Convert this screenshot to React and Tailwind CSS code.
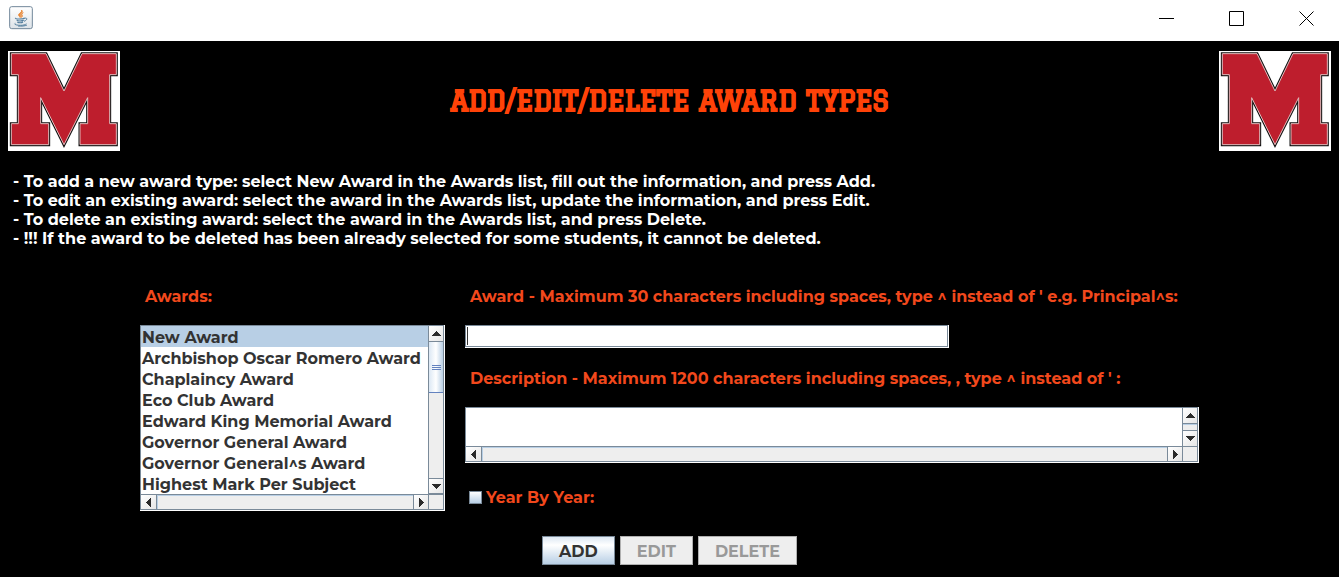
import React, { useState } from 'react';

const awards = [
  'New Award',
  'Archbishop Oscar Romero Award',
  'Chaplaincy Award',
  'Eco Club Award',
  'Edward King Memorial Award',
  'Governor General Award',
  'Governor General^s Award',
  'Highest Mark Per Subject',
];

const instructions = [
  '- To add a new award type: select New Award in the Awards list, fill out the information, and press Add.',
  '- To edit an existing award: select the award in the Awards list, update the information, and press Edit.',
  '- To delete an existing award: select the award in the Awards list, and press Delete.',
  '- !!! If the award to be deleted has been already selected for some students, it cannot be deleted.',
];

const M_PATH =
  'M10 8H114L168 120L222 8H325V71H305V218H325V281H216V218H239V140L168 281L98 140V218H122V281H10V218H31V71H10Z';

function Logo() {
  return (
    <svg className="h-[100px] w-28 shrink-0 bg-white" viewBox="0 0 336 300" role="img" aria-label="M">
      <path d={M_PATH} fill="none" stroke="#111" strokeWidth="9" />
      <path d={M_PATH} fill="#be1e2d" stroke="#e3b9bb" strokeWidth="3" />
    </svg>
  );
}

function JavaIcon() {
  return (
    <svg className="h-6 w-6" viewBox="0 0 72 72" fill="none">
      <defs>
        <linearGradient id="tile" x1="0" y1="0" x2="0" y2="1">
          <stop offset="0" stopColor="#ffffff" />
          <stop offset="1" stopColor="#dde3e8" />
        </linearGradient>
      </defs>
      <rect x="2" y="2" width="68" height="66" rx="6" fill="url(#tile)" stroke="#71879a" strokeWidth="3" />
      <path d="M37 12C42 18 27 22 29 28C30 31 33 32 33 34C37 31 32 28 34 25C36 21 44 18 37 12Z" fill="#e98a3a" stroke="#e98a3a" strokeWidth="3" />
      <path d="M43 20C37 22 35 26 38 29C39 31 37 33 35 35C43 31 41 29 39 27C38 24 40 22 43 20Z" fill="#e98a3a" stroke="#e98a3a" strokeWidth="2" />
      <path d="M20 36C15 40 42 40 47 36M23 42C26 46 40 46 44 42M25 48C29 51 38 51 42 48" stroke="#557f9e" strokeWidth="3.4" />
      <path d="M46 37C56 34 56 42 45 46" stroke="#557f9e" strokeWidth="3" />
      <path d="M19 52C8 57 46 62 52 53M27 60C37 61 48 60 54 57" stroke="#557f9e" strokeWidth="3" />
    </svg>
  );
}

const ARROWS = {
  Up: 'M4 0h1v1h1v1h1v1h1v1h1v1H0V4h1V3h1V2h1V1h1z',
  Down: 'M0 0h9v1H8v1H7v1H6v1H5v1H4V4H3V3H2V2H1V1H0z',
  Left: 'M5 0v9H4V8H3V7H2V6H1V5H0V4h1V3h1V2h1V1h1V0z',
  Right: 'M0 0h1v1h1v1h1v1h1v1h1v1H4v1H3v1H2v1H1v1H0z',
};

function Arrow({ dir, className }) {
  const flat = dir === 'Up' || dir === 'Down';
  return (
    <button
      type="button"
      aria-label={'Scroll ' + dir.toLowerCase()}
      className={'flex shrink-0 items-center justify-center border-[#7a8a99] bg-linear-to-br from-white to-[#e6e6e6] ' + className}
    >
      <svg className={flat ? 'h-[5px] w-[9px]' : 'h-[9px] w-[5px]'} viewBox={flat ? '0 0 9 5' : '0 0 5 9'}>
        <path d={ARROWS[dir]} fill="#2b2b2b" />
      </svg>
    </button>
  );
}

function HorizontalBar() {
  return (
    <div className="flex h-[15px] border-t border-[#7a8a99]">
      <div className="flex grow">
        <Arrow dir="Left" className="w-4 border-r" />
        <div className="grow border-t border-l border-[#b8cfe5] bg-[#eeeeee]" />
        <Arrow dir="Right" className="w-4 border-x" />
      </div>
      <div className="w-[14px] shrink-0 bg-[#eeeeee]" />
    </div>
  );
}

function ScrollPane({ children, bar }) {
  return (
    <div className="mt-[19px] border-r border-b border-white">
      <div className="border border-[#7a8a99] bg-white">
        <div className="flex">
          <div className="flex min-w-0 grow">{children}</div>
          <div className="flex w-[15px] shrink-0 flex-col border-l border-[#7a8a99] bg-[#eeeeee]">{bar}</div>
        </div>
        <HorizontalBar />
      </div>
    </div>
  );
}

const labelClass = 'block pl-[5px] text-[#f2481c]';

export default function App() {
  const [award, setAward] = useState(awards[0]);
  return (
    <div className="flex min-h-screen flex-col bg-black font-['Montserrat','Inter',sans-serif] text-base leading-[19px] font-bold">
      <header className="flex h-[41px] items-center justify-between bg-white pr-6 pb-1.5 pl-[9px]">
        <JavaIcon />
        <div className="flex items-center gap-[54px]">
          <button type="button" aria-label="Minimize">
            <svg className="h-4 w-4" viewBox="0 0 16 16"><path d="M0 8.5h15" stroke="#000" /></svg>
          </button>
          <button type="button" aria-label="Maximize">
            <svg className="h-4 w-4" viewBox="0 0 16 16"><path d="M.5 1.5h14v14H.5z" stroke="#000" fill="none" /></svg>
          </button>
          <button type="button" aria-label="Close">
            <svg className="h-4 w-4" viewBox="0 0 16 16"><path d="M.5 1.5l14 14M14.5 1.5l-14 14" stroke="#000" fill="none" /></svg>
          </button>
        </div>
      </header>

      <main className="pt-[10px] pb-3">
        <div className="flex items-center justify-between px-2">
          <Logo />
          <h1 className="font-['Graduate','Oswald','Roboto',sans-serif] text-[27px] leading-8 font-black text-[#ff4208] [-webkit-text-stroke:1px_#ff4208]">
            ADD/EDIT/DELETE AWARD TYPES
          </h1>
          <Logo />
        </div>

        <div className="mt-[21px] px-[13px] text-white">
          {instructions.map((line) => (
            <p key={line}>{line}</p>
          ))}
        </div>

        <form className="mt-[39px]" onSubmit={(e) => e.preventDefault()}>
          <div className="flex justify-center gap-5">
            <div className="w-[305px] shrink-0">
              <label htmlFor="awards" className={labelClass}>Awards:</label>
              <ScrollPane
                bar={
                  <>
                    <Arrow dir="Up" className="h-4 border-b" />
                    <div className="flex h-[51px] flex-col items-center justify-center gap-px border-b border-[#6382bf] bg-linear-to-r from-[#dce8f4] via-white to-[#b8cfe5]">
                      <span className="h-px w-[9px] bg-[#6382bf]" />
                      <span className="h-px w-[9px] bg-[#6382bf]" />
                      <span className="h-px w-[9px] bg-[#6382bf]" />
                    </div>
                    <div className="grow" />
                    <Arrow dir="Down" className="h-4 border-y" />
                  </>
                }
              >
                <select
                  id="awards"
                  size={8}
                  value={award}
                  onChange={(e) => setAward(e.target.value)}
                  className="h-[168px] w-full appearance-none overflow-hidden bg-white text-[#333333] outline-none"
                >
                  {awards.map((name) => (
                    <option
                      key={name}
                      value={name}
                      className="h-[21px] px-px pt-0.5 text-base leading-[19px] font-bold text-[#333333] checked:bg-[linear-gradient(#b8cfe5,#b8cfe5)]"
                    >
                      {name}
                    </option>
                  ))}
                </select>
              </ScrollPane>
            </div>

            <div className="w-[734px]">
              <label htmlFor="award-name" className={labelClass}>
                Award - Maximum 30 characters including spaces, type ^ instead of ' e.g. Principal^s:
              </label>
              <div className="mt-[19px] w-[484px] max-w-full border-r border-b border-white">
                <input
                  id="award-name"
                  type="text"
                  autoFocus
                  className="block h-[22px] w-full border border-[#7a8a99] bg-white bg-[linear-gradient(#333333,#333333)] bg-[length:1px_18px] bg-[position:1px_center] bg-no-repeat px-px text-[#333333] outline-none"
                />
              </div>
              <label htmlFor="description" className={labelClass + ' mt-[21px]'}>
                Description - Maximum 1200 characters including spaces, , type ^ instead of ' :
              </label>
              <ScrollPane
                bar={
                  <>
                    <Arrow dir="Up" className="h-4 border-b" />
                    <div className="grow border-t border-[#b8cfe5]" />
                    <Arrow dir="Down" className="h-4 border-t" />
                  </>
                }
              >
                <textarea
                  id="description"
                  className="block h-[38px] w-full resize-none overflow-hidden bg-white px-px text-[#333333] outline-none"
                />
              </ScrollPane>
              <div className="mt-[25px] flex items-center gap-1 pl-1">
                <input
                  id="year"
                  type="checkbox"
                  className="h-[13px] w-[13px] appearance-none border border-[#7a8a99] bg-linear-to-b from-white to-[#b8cfe5] checked:bg-[#6382bf]"
                />
                <label htmlFor="year" className="text-[#f2481c]">Year By Year:</label>
              </div>
            </div>
          </div>

          <div className="mt-[25px] flex justify-center gap-[5px]">
            <button
              type="submit"
              className="h-[29px] border border-[#7a8a99] bg-linear-to-b from-[#dde8f3] via-white via-30% to-[#b8cfe5] px-4 pt-0.5 text-[#333333]"
            >
              ADD
            </button>
            <button type="button" disabled className="h-[29px] border border-[#b0b0b0] bg-[#eeeeee] px-4 pt-0.5 text-[#999999]">
              EDIT
            </button>
            <button type="button" disabled className="h-[29px] border border-[#b0b0b0] bg-[#eeeeee] px-4 pt-0.5 text-[#999999]">
              DELETE
            </button>
          </div>
        </form>
      </main>
    </div>
  );
}
